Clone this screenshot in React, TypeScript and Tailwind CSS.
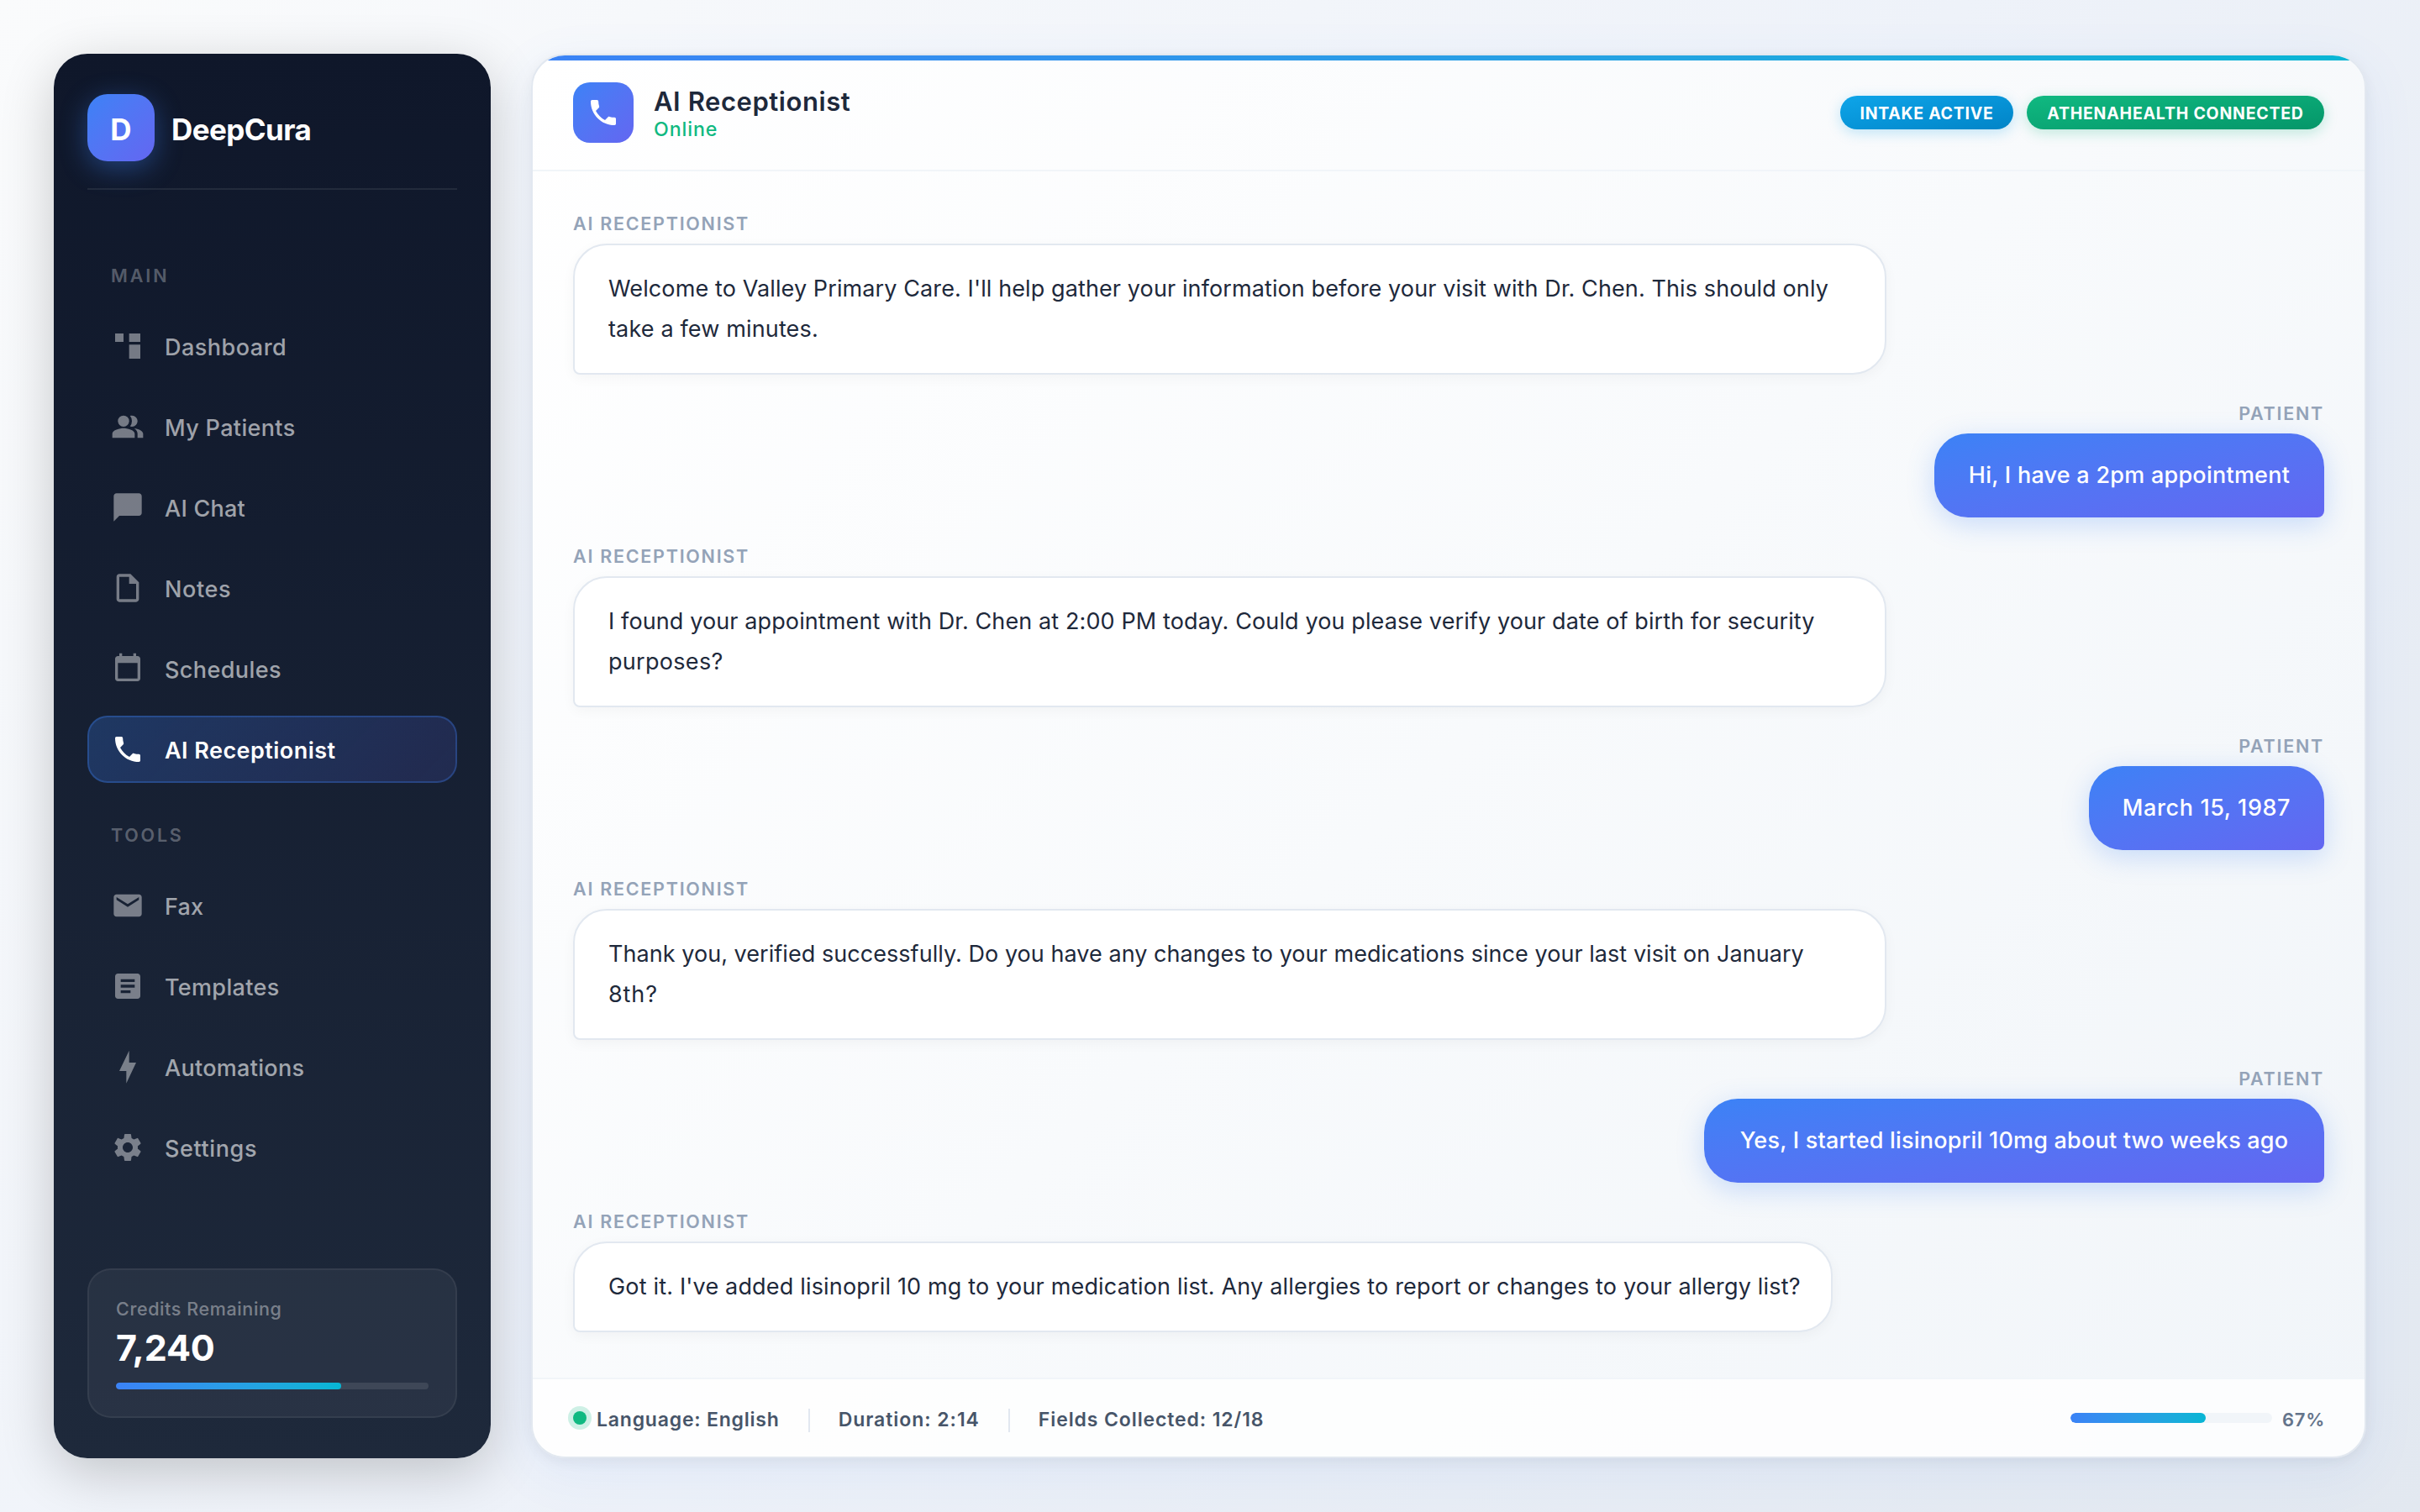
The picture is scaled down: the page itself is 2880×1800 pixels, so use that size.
import React from "react";
import { MdPeopleAlt, MdSettings } from "react-icons/md";

type IconProps = { className?: string };

const glyph = (d: string) =>
  function Glyph({ className }: IconProps) {
    return (
      <svg viewBox="0 0 24 24" fill="currentColor" className={className} aria-hidden="true">
        <path d={d} />
      </svg>
    );
  };

const DashboardIcon = glyph("M3 3h6v6H3zM13 3h8v6h-8zM13 11h8v10h-8z");
const ChatIcon = glyph("M20 2H4c-1.1 0-2 .9-2 2v18l4-4h14c1.1 0 2-.9 2-2V4c0-1.1-.9-2-2-2z");
const NotesIcon = glyph(
  "M14 2H6c-1.1 0-1.99.9-1.99 2L4 20c0 1.1.89 2 1.99 2H18c1.1 0 2-.9 2-2V8l-6-6zM6 20V4h7v5h5v11H6z",
);
const CalendarIcon = glyph(
  "M19 3h-1V1h-2v2H8V1H6v2H5c-1.11 0-1.99.9-1.99 2L3 19c0 1.1.89 2 2 2h14c1.1 0 2-.9 2-2V5c0-1.1-.9-2-2-2zm0 16H5V8h14v11z",
);
const PhoneIcon = glyph(
  "M6.62 10.79c1.44 2.83 3.76 5.14 6.59 6.59l2.2-2.2c.27-.27.67-.36 1.02-.24 1.12.37 2.33.57 3.57.57.55 0 1 .45 1 1V20c0 .55-.45 1-1 1-9.39 0-17-7.61-17-17 0-.55.45-1 1-1h3.5c.55 0 1 .45 1 1 0 1.25.2 2.45.57 3.57.11.35.03.74-.25 1.02l-2.2 2.2z",
);
const MailIcon = glyph(
  "M20 4H4c-1.1 0-1.99.9-1.99 2L2 18c0 1.1.9 2 2 2h16c1.1 0 2-.9 2-2V6c0-1.1-.9-2-2-2zm0 4l-8 5-8-5V6l8 5 8-5v2z",
);
const TemplateIcon = glyph(
  "M19 3H5c-1.1 0-2 .9-2 2v14c0 1.1.9 2 2 2h14c1.1 0 2-.9 2-2V5c0-1.1-.9-2-2-2zm-5 14H7v-2h7v2zm3-4H7v-2h10v2zm0-4H7V7h10v2z",
);
const BoltIcon = glyph("M13 0.5L6 15h5v8.8L18 9h-5z");

type NavEntry = {
  label: string;
  icon: React.ComponentType<IconProps>;
  tracking: string;
  active?: boolean;
};

const mainNav: NavEntry[] = [
  { label: "Dashboard", icon: DashboardIcon, tracking: "tracking-[0.5px]" },
  { label: "My Patients", icon: MdPeopleAlt, tracking: "tracking-[0.35px]" },
  { label: "AI Chat", icon: ChatIcon, tracking: "tracking-[0.25px]" },
  { label: "Notes", icon: NotesIcon, tracking: "tracking-[0.6px]" },
  { label: "Schedules", icon: CalendarIcon, tracking: "tracking-[0.4px]" },
  { label: "AI Receptionist", icon: PhoneIcon, tracking: "tracking-[0.456px]", active: true },
];

const toolsNav: NavEntry[] = [
  { label: "Fax", icon: MailIcon, tracking: "tracking-[0.2px]" },
  { label: "Templates", icon: TemplateIcon, tracking: "tracking-[0.334px]" },
  { label: "Automations", icon: BoltIcon, tracking: "tracking-[0.305px]" },
  { label: "Settings", icon: MdSettings, tracking: "tracking-[0.6px]" },
];

function NavItem({ label, icon: Icon, tracking, active }: NavEntry) {
  return (
    <a
      className={
        active
          ? "flex h-20 items-center gap-6 rounded-3xl border-2 border-[#3b82f6]/30 bg-[linear-gradient(135deg,rgba(59,130,246,0.25),rgba(99,102,241,0.15))] bg-origin-border px-[26px] text-white"
          : "flex h-20 items-center gap-6 rounded-3xl px-7 text-white/60"
      }
    >
      <Icon className={active ? "size-10" : "size-10 opacity-70"} />
      <span
        className={`pt-1 text-[27px] leading-10 ${active ? "font-semibold" : "font-medium"} ${tracking}`}
      >
        {label}
      </span>
    </a>
  );
}

function SectionLabel({ children, tracking }: { children: string; tracking: string }) {
  return (
    <div className={`mb-8 pl-7 text-[21.5px] leading-6 font-semibold text-white/30 ${tracking}`}>
      {children}
    </div>
  );
}

function Sidebar() {
  return (
    <aside className="flex w-[520px] shrink-0 flex-col rounded-[40px] bg-linear-to-b from-[#0f172a] to-[#1e293b] px-10 py-12 shadow-[0_16px_64px_rgba(0,0,0,0.2)]">
      <div className="flex items-center gap-5 border-b-2 border-white/8 pb-8">
        <div className="flex size-20 items-center justify-center rounded-3xl bg-linear-to-br from-[#3b82f6] to-[#6366f1] shadow-[0_8px_32px_rgba(59,130,246,0.4)]">
          <span className="pt-[3px] text-[35px] leading-10 font-bold text-white">D</span>
        </div>
        <span className="pt-[3px] text-[35px] leading-10 font-bold tracking-[-0.58px] text-white">
          DeepCura
        </span>
      </div>
      <nav className="mt-[90px] flex flex-col">
        <SectionLabel tracking="tracking-[2.9px]">MAIN</SectionLabel>
        <div className="flex flex-col gap-4">
          {mainNav.map((item) => (
            <NavItem key={item.label} {...item} />
          ))}
        </div>
        <div className="h-[50px]" />
        <SectionLabel tracking="tracking-[2.77px]">TOOLS</SectionLabel>
        <div className="flex flex-col gap-4">
          {toolsNav.map((item) => (
            <NavItem key={item.label} {...item} />
          ))}
        </div>
      </nav>
      <div className="mt-auto rounded-[28px] border-2 border-white/6 bg-white/5 p-8">
        <div className="text-[21.5px] leading-7 font-medium tracking-[0.61px] text-white/40">
          Credits Remaining
        </div>
        <div className="mt-2 text-[43px] leading-[48px] font-bold tracking-[-0.17px] text-white">7,240</div>
        <div className="mt-[18px] h-2 overflow-hidden rounded bg-white/10">
          <div className="h-full w-[72%] rounded bg-linear-to-r from-[#3b82f6] to-[#06b6d4]" />
        </div>
      </div>
    </aside>
  );
}

type Line = { text: string; tracking: string };
type Message =
  | { from: "ai"; lines: Line[]; width: string }
  | { from: "patient"; lines: Line[]; width: string };

const messages: Message[] = [
  {
    from: "ai",
    width: "w-[1563px]",
    lines: [
      {
        text: "Welcome to Valley Primary Care. I'll help gather your information before your visit with Dr. Chen. This should only",
        tracking: "tracking-[0.107px]",
      },
      { text: "take a few minutes.", tracking: "tracking-[0.147px]" },
    ],
  },
  {
    from: "patient",
    width: "w-[464px]",
    lines: [{ text: "Hi, I have a 2pm appointment", tracking: "tracking-[0.25px]" }],
  },
  {
    from: "ai",
    width: "w-[1563px]",
    lines: [
      {
        text: "I found your appointment with Dr. Chen at 2:00 PM today. Could you please verify your date of birth for security",
        tracking: "tracking-[0.112px]",
      },
      { text: "purposes?", tracking: "tracking-[0.3px]" },
    ],
  },
  {
    from: "patient",
    width: "w-[280px]",
    lines: [{ text: "March 15, 1987", tracking: "tracking-[0.6px]" }],
  },
  {
    from: "ai",
    width: "w-[1563px]",
    lines: [
      {
        text: "Thank you, verified successfully. Do you have any changes to your medications since your last visit on January",
        tracking: "tracking-[0.048px]",
      },
      { text: "8th?", tracking: "tracking-[0.9px]" },
    ],
  },
  {
    from: "patient",
    width: "w-[738px]",
    lines: [
      { text: "Yes, I started lisinopril 10mg about two weeks ago", tracking: "tracking-[0.2px]" },
    ],
  },
  {
    from: "ai",
    width: "w-[1499px]",
    lines: [
      {
        text: "Got it. I've added lisinopril 10 mg to your medication list. Any allergies to report or changes to your allergy list?",
        tracking: "tracking-[0.173px]",
      },
    ],
  },
];

function MessageRow({ message }: { message: Message }) {
  const ai = message.from === "ai";
  return (
    <div className={ai ? "flex flex-col items-start" : "flex flex-col items-end"}>
      <div className="h-[30px] text-[21.5px] leading-3 font-semibold tracking-[1.74px] text-[#94a3b8]">
        {ai ? "AI RECEPTIONIST" : "PATIENT"}
      </div>
      <div
        className={
          ai
            ? `rounded-[40px] rounded-bl-lg border-2 border-[#e2e8f0] bg-white px-10 py-7 text-[27px] leading-[48px] whitespace-nowrap text-[#1e293b] shadow-[0_4px_16px_rgba(0,0,0,0.04)] ${message.width}`
            : `rounded-[40px] rounded-br-lg bg-linear-to-br from-[#3b82f6] to-[#6366f1] py-[26px] text-center text-[27px] leading-[48px] font-medium whitespace-nowrap text-white shadow-[0_8px_32px_rgba(59,130,246,0.25)] ${message.width}`
        }
      >
        {message.lines.map((line) => (
          <div key={line.text} className={line.tracking}>
            {line.text}
          </div>
        ))}
      </div>
    </div>
  );
}

function ChatPanel() {
  return (
    <main className="flex min-w-0 flex-1 flex-col overflow-hidden rounded-[40px] border-2 border-[#e2e8f0] bg-[linear-gradient(135deg,#ffffff_0%,#f8fafc_50%,#f1f5f9_100%)] shadow-[0_16px_64px_rgba(59,130,246,0.08),0_4px_16px_rgba(0,0,0,0.06)]">
      <div className="h-1.5 shrink-0 bg-linear-to-r from-[#3b82f6] to-[#06b6d4]" />
      <header className="flex h-[132px] shrink-0 items-center border-b-2 border-[#f1f5f9] px-12 pb-1.5">
        <div className="flex size-[72px] items-center justify-center rounded-[20px] bg-linear-to-br from-[#3b82f6] to-[#6366f1]">
          <PhoneIcon className="size-10 text-white" />
        </div>
        <div className="ml-6 flex flex-col pt-0.5">
          <span className="text-[31px] leading-[38px] font-semibold tracking-[0.56px] text-[#1e293b]">
            AI Receptionist
          </span>
          <span className="text-[23.2px] leading-7 font-medium tracking-[0.9px] text-[#10b981]">Online</span>
        </div>
        <div className="ml-auto flex gap-4 text-[19.5px] leading-10 font-bold text-white">
          <span className="h-10 w-[206px] rounded-full bg-linear-to-br from-[#0ea5e9] to-[#0284c7] pt-px text-center tracking-[0.71px] shadow-[0_4px_16px_rgba(14,165,233,0.25)]">
            INTAKE ACTIVE
          </span>
          <span className="h-10 w-[354px] rounded-full bg-linear-to-br from-[#10b981] to-[#059669] pt-px text-center tracking-[0.77px] shadow-[0_4px_16px_rgba(16,185,129,0.25)]">
            ATHENAHEALTH CONNECTED
          </span>
        </div>
      </header>
      <div className="flex flex-1 flex-col gap-10 px-12 pt-14">
        {messages.map((message) => (
          <MessageRow key={message.lines[0].text} message={message} />
        ))}
      </div>
      <footer className="flex h-[94px] shrink-0 items-center border-t-2 border-[#f1f5f9] bg-white/80 px-12">
        <div className="flex items-center gap-[34px] text-[23px] leading-8 font-semibold text-[#475569]">
          <div className="flex items-center gap-3">
            <span className="size-4 rounded-full bg-[#10b981] shadow-[0_0_0_6px_rgba(16,185,129,0.2)]" />
            <span className="pt-[3px] tracking-[0.79px]">Language: English</span>
          </div>
          <span className="mt-1.5 h-7 w-0.5 bg-[#e2e8f0]" />
          <span className="pt-[3px] tracking-[0.95px]">Duration: 2:14</span>
          <span className="mt-1.5 h-7 w-0.5 bg-[#e2e8f0]" />
          <span className="pt-[3px] tracking-[0.89px]">Fields Collected: 12/18</span>
        </div>
        <div className="ml-auto flex items-center gap-3">
          <div className="h-3 w-60 overflow-hidden rounded-md bg-[#f1f5f9]">
            <div className="h-full w-[67%] rounded-md bg-linear-to-r from-[#3b82f6] to-[#06b6d4]" />
          </div>
          <span className="w-[50px] pt-1 text-[22px] leading-8 font-semibold tracking-[0.7px] text-[#64748b]">
            67%
          </span>
        </div>
      </footer>
    </main>
  );
}

export default function App() {
  return (
    <div className="flex h-[1800px] w-[2880px] gap-12 bg-[linear-gradient(135deg,#fafbfc_0%,#eef2f9_50%,#e2e8f0_100%)] p-16 font-['Inter',sans-serif]">
      <Sidebar />
      <ChatPanel />
    </div>
  );
}
